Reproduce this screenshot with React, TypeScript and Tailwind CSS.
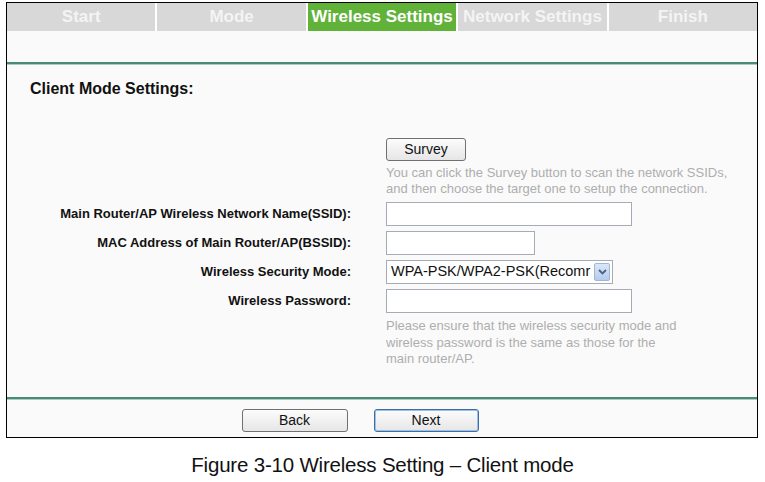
const tabs = ['Start', 'Mode', 'Wireless Settings', 'Network Settings', 'Finish'];

function Field({ label, children }: { label: string; children: React.ReactNode }) {
  return (
    <div className="flex items-center h-[29px]">
      <div className="w-[344px] text-right text-[13px] font-bold text-[#111] whitespace-nowrap">{label}</div>
      <div className="ml-[35px] flex items-center">{children}</div>
    </div>
  );
}

function Btn({ label, w, active }: { label: string; w: string; active?: boolean }) {
  return (
    <button
      className={`${w} h-[23px] rounded-[3px] border text-[14px] text-[#111] bg-gradient-to-b from-[#fcfcfc] to-[#e6e6e6] ${active ? 'border-[#3a6ea5] shadow-[inset_0_0_0_1px_#9cc0e8]' : 'border-[#707070]'}`}
    >
      {label}
    </button>
  );
}

export default function App() {
  return (
    <div className="w-[765px] h-[482px] bg-white font-['Liberation_Sans',Arial,sans-serif] pt-[2px]">
      <div className="ml-[6px] w-[752px] h-[436px] border border-black bg-[#fafafa] flex flex-col">
        {/* Tabs */}
        <div className="flex h-[28px] gap-[2px] bg-white">
          {tabs.map((t, i) => (
            <div
              key={t}
              className={`flex-1 flex items-center justify-center text-[17px] font-bold whitespace-nowrap ${i === 2 ? 'bg-[#60b238] text-white' : 'bg-[#d8d8d8] text-[#f4f4f4]'}`}
            >
              {t}
            </div>
          ))}
        </div>
        <div className="h-[31px]" />
        <div className="h-[2px] bg-[#4d8c74]" />
        <div className="h-px bg-[#a9cdbf]" />

        {/* Content */}
        <div className="flex-1">
          <div className="pl-[23px] pt-[12px] text-[16px] font-bold text-[#111]">Client Mode Settings:</div>

          <div className="mt-[36px] pl-[379px]">
            <Btn label="Survey" w="w-[80px]" />
            <p className="mt-[4px] text-[13px] leading-[16px] text-[#aeaeae]">
              You can click the Survey button to scan the network SSIDs,
              <br />
              and then choose the target one to setup the connection.
            </p>
          </div>

          <div className="mt-[2px]">
            <Field label="Main Router/AP Wireless Network Name(SSID):">
              <div className="w-[246px] h-[24px] border border-[#a5acb5] bg-white" />
            </Field>
            <Field label="MAC Address of Main Router/AP(BSSID):">
              <div className="w-[149px] h-[24px] border border-[#a5acb5] bg-white" />
            </Field>
            <Field label="Wireless Security Mode:">
              <div className="w-[227px] h-[24px] border border-[#a5acb5] bg-white flex items-center pl-[4px] pr-[2px]">
                <span className="flex-1 text-[14.5px] text-[#111] whitespace-nowrap overflow-hidden">WPA-PSK/WPA2-PSK(Recomr</span>
                <span className="w-[16px] h-[18px] rounded-[2px] border border-[#9fb6d6] bg-gradient-to-b from-[#dbe7f8] to-[#b5cbec] flex items-center justify-center">
                  <svg width="9" height="6" viewBox="0 0 9 6">
                    <path d="M1 1l3.5 3.5L8 1" fill="none" stroke="#4d6185" strokeWidth="1.8" />
                  </svg>
                </span>
              </div>
            </Field>
            <Field label="Wireless Password:">
              <div className="w-[246px] h-[24px] border border-[#a5acb5] bg-white" />
            </Field>
          </div>
          <p className="mt-[3px] pl-[379px] text-[13px] leading-[16.5px] text-[#aeaeae]">
            Please ensure that the wireless security mode and
            <br />
            wireless password is the same as those for the
            <br />
            main router/AP.
          </p>
        </div>

        <div className="h-[2px] bg-[#4d8c74]" />
        <div className="h-px bg-[#a9cdbf]" />
        <div className="h-[37px] flex items-start pt-[9px] justify-center gap-[26px] pr-[44px]">
          <Btn label="Back" w="w-[106px]" />
          <Btn label="Next" w="w-[105px]" active />
        </div>
      </div>
      <div className="mt-[12px] text-center text-[20.5px] text-[#111] tracking-[-0.2px]">
        Figure 3-10 Wireless Setting – Client mode
      </div>
    </div>
  );
}
